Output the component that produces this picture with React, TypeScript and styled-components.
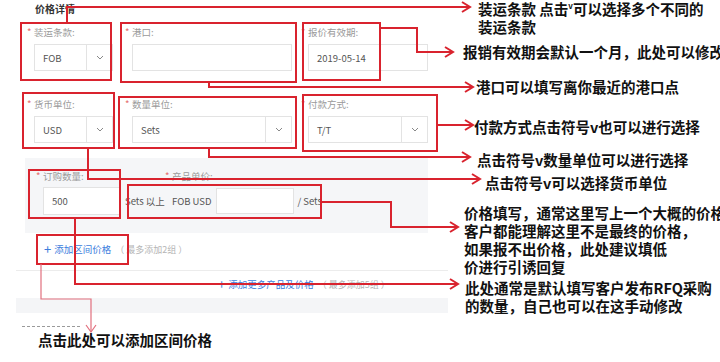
import React from "react";
import styled, { createGlobalStyle } from "styled-components";

const GlobalStyle = createGlobalStyle`
  html, body { margin: 0; padding: 0; background: #fff; }
  body { font-family: "Noto Sans CJK SC", "Noto Sans", sans-serif; }
`;

const RED = "#d9232e";

const Page = styled.div`
  position: relative;
  width: 720px;
  height: 362px;
  overflow: hidden;
  background: #fff;
`;

const Form = styled.div`
  width: 448px;
  font-size: 9.5px;
  color: #666;
`;

const Title = styled.div`
  margin-left: 35px;
  height: 18px;
  line-height: 18px;
  font-size: 10px;
  font-weight: bold;
  color: #333;
`;

const FieldRow = styled.div<{ $mt: number }>`
  display: flex;
  margin-top: ${(p) => p.$mt}px;
  padding-left: 34px;
`;

const Field = styled.div<{ $w: number; $ml?: number }>`
  display: flex;
  flex-direction: column;
  width: ${(p) => p.$w}px;
  margin-left: ${(p) => p.$ml ?? 0}px;
`;

const Label = styled.div<{ $mb?: number }>`
  height: 14px;
  line-height: 14px;
  color: #9a9a9a;
  white-space: nowrap;
  margin-bottom: ${(p) => p.$mb ?? 5}px;
`;

const Star = styled.span`
  display: inline-block;
  width: 7px;
  margin-left: -7px;
  color: #e46a6a;
`;

const Box = styled.div<{ $h?: number }>`
  display: flex;
  height: ${(p) => p.$h ?? 27}px;
  box-sizing: border-box;
  border: 1px solid #e3e3e3;
  background: #fff;
`;

const BoxText = styled.div`
  flex: 1;
  display: flex;
  align-items: center;
  padding-left: 8px;
  color: #555;
`;

const Caret = styled.div`
  width: 25px;
  border-left: 1px solid #e3e3e3;
  display: flex;
  align-items: center;
  justify-content: center;
`;

const Panel = styled.div`
  display: flex;
  align-items: flex-end;
  margin: 15px 0 0 25px;
  width: 403px;
  height: 75px;
  box-sizing: border-box;
  padding: 11px 0 18px 18px;
  background: #f5f6f8;
`;

const InlineText = styled.div<{ $w?: number; $ml?: number }>`
  height: 28px;
  display: flex;
  align-items: center;
  white-space: nowrap;
  color: #555;
  margin-left: ${(p) => p.$ml ?? 0}px;
  width: ${(p) => (p.$w ? `${p.$w}px` : "auto")};
`;

const PriceLine = styled.div`
  display: flex;
  align-items: center;
  height: 28px;
`;

const LinkRow = styled.div<{ $mt: number; $pl: number }>`
  display: flex;
  align-items: center;
  height: 14px;
  margin-top: ${(p) => p.$mt}px;
  padding-left: ${(p) => p.$pl}px;
  white-space: nowrap;
`;

const Plus = styled.span`
  font-size: 13px;
  line-height: 14px;
  margin-right: 3px;
  color: #3b7ddd;
`;

const LinkText = styled.span`
  color: #3b7ddd;
`;

const Hint = styled.span`
  margin-left: 4px;
  color: #b5b5b5;
  font-size: 9px;
`;

const Separator = styled.div`
  margin: 14px 0 0 16px;
  width: 432px;
  height: 1px;
  background: #ececec;
`;

const Band = styled.div`
  margin: 7px 0 0 16px;
  width: 432px;
  height: 15px;
  background: #f4f5f7;
`;

const CutLabel = styled.div`
  margin: 13px 0 0 22px;
  width: 58px;
  border-top: 1px dashed #9a9a9a;
`;

const Overlay = styled.svg`
  position: absolute;
  left: 0;
  top: 0;
  pointer-events: none;
`;

const Note = styled.div<{ $x: number; $y: number }>`
  position: absolute;
  left: ${(p) => p.$x}px;
  top: ${(p) => p.$y}px;
  font-size: 14.5px;
  line-height: 18px;
  font-weight: 600;
  color: #111;
  white-space: nowrap;
  sup {
    font-size: 8px;
    vertical-align: 6px;
    line-height: 0;
  }
`;

const Chevron = () => (
  <svg width="8" height="5" viewBox="0 0 8 5">
    <path d="M1 1l3 3 3-3" fill="none" stroke="#888" strokeWidth="1" />
  </svg>
);

const Select = ({ value }: { value: string }) => (
  <Box>
    <BoxText>{value}</BoxText>
    <Caret>
      <Chevron />
    </Caret>
  </Box>
);

const boxes: [number, number, number, number][] = [
  [21, 23, 111, 80],
  [121, 23, 296, 82],
  [303, 23, 380, 80],
  [23, 93, 114, 148],
  [119, 97, 296, 148],
  [303, 95, 437, 151],
  [29, 170, 120, 218],
  [128, 185, 321, 218],
  [37, 235, 128, 264],
];

const leaders: number[][][] = [
  [[67, 23], [67, 7], [470, 7]],
  [[380, 28], [417, 28], [417, 52], [453, 52]],
  [[209, 82], [209, 87], [473, 87]],
  [[437, 125], [473, 125]],
  [[209, 148], [209, 157], [470, 157]],
  [[88, 148], [88, 179], [480, 179]],
  [[321, 202], [391, 202], [391, 227], [458, 227]],
  [[75, 218], [75, 284], [458, 284]],
];

const Annotations = () => (
  <Overlay width="720" height="362" viewBox="0 0 720 362">
    {boxes.map(([x1, y1, x2, y2], i) => (
      <rect key={i} x={x1} y={y1} width={x2 - x1} height={y2 - y1} fill="none" stroke={RED} strokeWidth="2" />
    ))}
    {leaders.map((pts, i) => {
      const [tx, ty] = pts[pts.length - 1];
      return (
        <g key={i} fill="none" stroke={RED} strokeWidth="2">
          <polyline points={pts.map((p) => p.join(",")).join(" ")} />
          <polyline points={`${tx - 8},${ty - 5} ${tx},${ty} ${tx - 8},${ty + 5}`} />
        </g>
      );
    })}
    <g fill="none" stroke="#e2707e" strokeWidth="1.2">
      <polyline points="41,264 41,299 91,299 91,332" />
      <polyline points="86,325 91,332 96,325" />
    </g>
  </Overlay>
);

export default function App() {
  return (
    <Page>
      <GlobalStyle />
      <Form>
        <Title>价格详情</Title>
        <FieldRow $mt={7}>
          <Field $w={79}>
            <Label><Star>*</Star>装运条款:</Label>
            <Select value="FOB" />
          </Field>
          <Field $w={160} $ml={19}>
            <Label><Star>*</Star>港口:</Label>
            <Box />
          </Field>
          <Field $w={120} $ml={16}>
            <Label><Star>*</Star>报价有效期:</Label>
            <Box>
              <BoxText>2019-05-14</BoxText>
            </Box>
          </Field>
        </FieldRow>
        <FieldRow $mt={26}>
          <Field $w={79}>
            <Label><Star>*</Star>货币单位:</Label>
            <Select value="USD" />
          </Field>
          <Field $w={160} $ml={19}>
            <Label><Star>*</Star>数量单位:</Label>
            <Select value="Sets" />
          </Field>
          <Field $w={120} $ml={16}>
            <Label><Star>*</Star>付款方式:</Label>
            <Select value="T/T" />
          </Field>
        </FieldRow>
        <Panel>
          <Field $w={77}>
            <Label $mb={4}><Star>*</Star>订购数量:</Label>
            <Box $h={28}>
              <BoxText>500</BoxText>
            </Box>
          </Field>
          <InlineText $w={47} $ml={5}>Sets 以上</InlineText>
          <Field $w={150}>
            <Label $mb={4}><Star>*</Star>产品单价:</Label>
            <PriceLine>
              <InlineText>FOB USD</InlineText>
              <Field $w={79} $ml={4}>
                <Box $h={26} />
              </Field>
              <InlineText $ml={3}>/ Sets</InlineText>
            </PriceLine>
          </Field>
        </Panel>
        <LinkRow $mt={9} $pl={44}>
          <Plus>+</Plus>
          <LinkText>添加区间价格</LinkText>
          <Hint>（ 最多添加2组 ）</Hint>
        </LinkRow>
        <Separator />
        <LinkRow $mt={6} $pl={218}>
          <Plus>+</Plus>
          <LinkText>添加更多产品及价格</LinkText>
          <Hint>（ 最多添加5组 ）</Hint>
        </LinkRow>
        <Band />
        <CutLabel />
      </Form>

      <Note $x={478} $y={0}>
        装运条款 点击<sup>v</sup>可以选择多个不同的
        <br />
        装运条款
      </Note>
      <Note $x={463} $y={43}>报销有效期会默认一个月，此处可以修改</Note>
      <Note $x={476} $y={78}>港口可以填写离你最近的港口点</Note>
      <Note $x={474} $y={118}>付款方式点击符号v也可以进行选择</Note>
      <Note $x={477} $y={151}>点击符号v数量单位可以进行选择</Note>
      <Note $x={485} $y={174}>点击符号v可以选择货币单位</Note>
      <Note $x={464} $y={204}>
        价格填写，通常这里写上一个大概的价格
        <br />
        客户都能理解这里不是最终的价格，
        <br />
        如果报不出价格，此处建议填低
        <br />
        价进行引诱回复
      </Note>
      <Note $x={465} $y={279}>
        此处通常是默认填写客户发布RFQ采购
        <br />
        的数量，自己也可以在这手动修改
      </Note>
      <Note $x={38} $y={331}>点击此处可以添加区间价格</Note>

      <Annotations />
    </Page>
  );
}
